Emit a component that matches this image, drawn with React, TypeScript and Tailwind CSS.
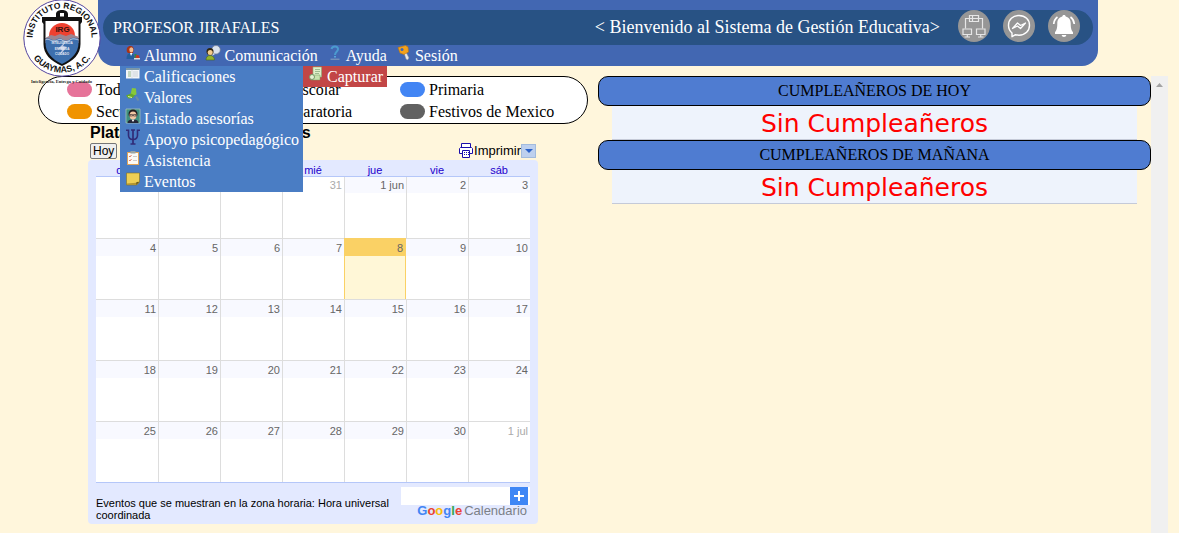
import type { ReactNode } from "react";

const serif = "font-['Liberation_Serif',serif]";
const sans = "font-['Liberation_Sans',sans-serif]";

const Icon = ({ children }: { children: ReactNode }) => (
  <svg viewBox="0 0 16 16" className="h-4 w-4 shrink-0" aria-hidden="true">
    {children}
  </svg>
);

const StudentIcon = () => (
  <Icon>
    <path d="M2 7C1 3 3 .8 5.500 1 8 1 9 3 8.500 5L8 8H3z" fill="#a93316" />
    <ellipse cx="6.300" cy="4.800" rx="2" ry="2.600" fill="#f3bd90" />
    <path d="M1.500 14c0-4 1.500-6 4-6s4 2 4 6z" fill="#245e9c" />
    <path d="M5 8l1 3 1.500-3z" fill="#fff" />
    <path d="M9.500 9h2v4h-2z" fill="#2f8b45" />
    <circle cx="12.500" cy="12" r="2" fill="#c83824" />
    <path d="M9 13h6v1.500H9z" fill="#ddd" />
  </Icon>
);

const ChatIcon = () => (
  <Icon>
    <circle cx="11" cy="4.800" r="4.300" fill="#d9e2ee" stroke="#6d7c91" strokeWidth=".7" />
    <path d="M8 8l-1 3 3-2z" fill="#d9e2ee" />
    <circle cx="5" cy="6.500" r="3.500" fill="#30250f" />
    <circle cx="5.200" cy="7.500" r="2.500" fill="#f4cc8d" />
    <path d="M1 15c0-3 1.500-4.500 4-4.500S9.500 12 9.500 15z" fill="#92b32d" stroke="#4b641c" strokeWidth=".6" />
  </Icon>
);

const HelpIcon = () => (
  <Icon>
    <path d="M4.500 4C5 1 11 .5 11 4c0 3-3 2.500-3 6" fill="none" stroke="#4b9bcf" strokeWidth="2" />
    <path d="M7 11h2v1.500H7z" fill="#58a9da" />
    <path d="M3.500 14.200h9" stroke="#8ca3bd" />
  </Icon>
);

const KeyIcon = () => (
  <Icon>
    <path d="M8 8l2-1 3 6-1.500 2-1.500-1z" fill="#e8e8e8" stroke="#8f8f8f" strokeWidth=".5" />
    <path d="M2 2.500L9.500.5 12 2l.5 5L8 9.500 4 8z" fill="#f4a21b" stroke="#bd750d" strokeWidth=".6" />
    <circle cx="6" cy="4.500" r="1.500" fill="#4267b2" />
  </Icon>
);

const GradesIcon = () => (
  <Icon>
    <path d="M1 2.500h13.500v10H1z" fill="#f4f6f8" />
    <path d="M1 2h13.500v2H1z" fill="#7c98a8" />
    <path d="M3 6h3M3 8h3M3 10h3" stroke="#97b88c" />
    <path d="M8 6h5M8 8h5M8 10h5" stroke="#b9c2cc" strokeWidth=".7" />
    <path d="M7 4v8" stroke="#c0c8d0" strokeWidth=".5" />
  </Icon>
);

const ValuesIcon = () => (
  <Icon>
    <path d="M7 1l4 .5.5 6-3 1-3-1z" fill="#87c83a" />
    <path d="M1 8.500l5-2 4 2-2.500 2.500-4 .5z" fill="#67a928" />
    <path d="M3 9.500l4 1" stroke="#d8f2a5" />
    <path d="M11 9.500l2.500 4" stroke="#6d8da3" strokeWidth="2" />
  </Icon>
);

const AdvisorIcon = () => (
  <Icon>
    <path d="M1 1h14v14H1z" fill="#3f8f80" />
    <path d="M1 1h14v14H1z" fill="none" stroke="#b3c8b7" strokeWidth=".7" />
    <circle cx="8" cy="6" r="4.500" fill="#221b1d" />
    <ellipse cx="8" cy="7.500" rx="3.500" ry="4" fill="#f2c6a2" />
    <path d="M5 6.500h2.500v1.500H5zM8.500 6.500H11v1.500H8.500z" fill="none" stroke="#28242b" strokeWidth=".6" />
    <path d="M2.500 15c0-2.500 2-3.500 5.500-3.500s5.500 1 5.500 3.500z" fill="#252637" />
    <path d="M6.500 11.500L8 14l1.500-2.500z" fill="#fff" />
  </Icon>
);

const PsiIcon = () => (
  <Icon>
    <path d="M1 1.200h2.500v5c0 3 1 4.200 4.500 4.200s4.500-1.200 4.500-4.200v-5H15" fill="none" stroke="#312c78" strokeWidth="1.600" />
    <path d="M8 1v14M5.500 15h5M6 1h4" stroke="#312c78" strokeWidth="1.700" />
  </Icon>
);

const ClipboardIcon = () => (
  <Icon>
    <path d="M2 2h12v13H2z" fill="#dda35a" />
    <path d="M3 3h10v11H3z" fill="#fcfaf5" />
    <path d="M5.500 1h5v2.500h-5z" fill="#9aa5a5" />
    <path d="M4 6l1 1 1.500-2M4 10l1 1 1.500-2" fill="none" stroke="#d95d47" strokeWidth=".8" />
    <path d="M8 6.500h4M8 10.500h4" stroke="#ccc" />
  </Icon>
);

const NoteIcon = () => (
  <Icon>
    <path d="M1.500 2h13v9l-3 3h-10z" fill="#edcf55" stroke="#81701f" strokeWidth=".6" />
    <path d="M2 12.500l12.500-1-3 2.500H2z" fill="#b29532" />
    <path d="M11 14l.5-3 3-.2z" fill="#6a591b" />
  </Icon>
);

const CaptureIcon = () => (
  <Icon>
    <path d="M5 1h8.500v10H5z" fill="#dff0ca" stroke="#8cae7b" strokeWidth=".6" />
    <path d="M7 3.500h5M7 5.500h5M7 7.500h4" stroke="#8caf80" strokeWidth=".8" />
    <path d="M3 9h9v5H3z" fill="#c7e3ae" stroke="#74985e" strokeWidth=".5" />
    <circle cx="4" cy="11" r="2.500" fill="#e6f2d4" stroke="#759968" />
  </Icon>
);

const Logo = () => (
  <svg viewBox="20 0 84 86" className="h-[86px] w-[84px]" role="img" aria-label="Instituto Regional Guaymas">
    <defs>
      <path id="ring-top" d="M32.500 38a29.500 29.500 0 0 1 59 0" />
      <path id="ring-bottom" d="M26.500 37a35.500 35.500 0 0 0 71 0" />
      <clipPath id="shield">
        <path d="M45.500 21h33v22c0 9-6 16-16.500 21-10.500-5-16.500-12-16.500-21z" />
      </clipPath>
    </defs>
    <circle cx="62" cy="38" r="38.200" fill="#fff" stroke="#5546a0" />
    <g fontFamily="Liberation Sans, sans-serif" fontWeight="bold" fill="#111">
      <text fontSize="8.500">
        <textPath href="#ring-top" startOffset="50%" textAnchor="middle">INSTITUTO REGIONAL</textPath>
      </text>
      <text fontSize="8.800">
        <textPath href="#ring-bottom" startOffset="50%" textAnchor="middle">GUAYMAS, A.C.</textPath>
      </text>
    </g>
    <path d="M42 22v-5h14v-3c0-5.500 12-5.500 12 0v3h14v5l-1.500 2v20c0 10-7 17-18.500 22-11.500-5-18.500-12-18.500-22V24z" fill="#111" />
    <path d="M60 13h4v3.500h-4z" fill="#fff" />
    <g clipPath="url(#shield)">
      <path d="M44 20h36v18H44z" fill="#fff" />
      <path d="M49 36a13 13 0 0 1 26 0z" fill="#ee4130" />
      <path d="M45 38l6-3 4 1 5-2 6 2 5-2 8 3v6H45z" fill="#9d8590" />
      <path d="M45 39c4-2 5 1 9 1s5-3 8-1 5 2 8 0 5-1 9 0v28H45z" fill="#3d6fad" />
      <path d="M45 40c4-2 5 1 9 1s5-3 8-1 5 2 8 0 5-1 9 0" fill="none" stroke="#dfe5ee" strokeWidth=".8" />
      <path d="M66 41l-8 8 4 1-3 6 8-9-4-1z" fill="#bfc9e2" />
    </g>
    <g fontFamily="Liberation Sans, sans-serif" fontWeight="bold" textAnchor="middle">
      <text x="62.500" y="32" fontSize="8" fill="#33130f">IRG</text>
      <g fontSize="3" fill="#e8ecf5">
        <text x="62" y="44">INTELIGENCIA</text>
        <text x="62" y="49.500">ENTREGA</text>
        <text x="62" y="55">CUIDADO</text>
      </g>
    </g>
    <text x="61.500" y="83" fontSize="4.500" fontWeight="bold" fontFamily="Liberation Serif, serif" textAnchor="middle" fill="#222">
      Inteligencia, Entrega y Cuidado
    </text>
  </svg>
);

const NetworkIcon = () => (
  <svg viewBox="0 0 32 32" className="h-8 w-8" fill="none" stroke="#e6e6e6" aria-hidden="true">
    <path d="M11.500 5.500h9v6h-9zM11.500 8.500h9M14.500 5.500v6M11 8.500H7.500v10M21 8.500h3.500v10" strokeWidth="1.200" />
    <path d="M5 19h8.500v5.500H5zM18.500 19H27v5.500h-8.500zM9.300 25v2M22.700 25v2M6.500 27h5.500M20 27h5.500" strokeWidth="1.200" />
  </svg>
);

const MessengerIcon = () => (
  <svg viewBox="0 0 32 32" className="h-8 w-8" fill="none" stroke="#fff" strokeWidth="1.400" strokeLinejoin="round" aria-hidden="true">
    <path d="M16 5.500c-6.300 0-10.500 4.300-10.500 9.800 0 3.200 1.400 5.900 3.500 7.700v3.700l3.500-2c1.100.3 2.300.5 3.500.5 6.300 0 10.500-4.400 10.500-9.900S22.300 5.500 16 5.500z" />
    <path d="M9.500 18.500l5-5.500 3 2.500 5-2.500-5 5.500-3-2.500z" strokeWidth="1.300" />
  </svg>
);

const BellIcon = () => (
  <svg viewBox="0 0 32 32" className="h-8 w-8" fill="#fff" aria-hidden="true">
    <path d="M16 5c1 0 1.700.7 1.700 1.600 3.500.8 5 3.500 5 7 0 5 .8 7 2.300 8.700v1.700H7v-1.700c1.500-1.700 2.300-3.700 2.300-8.700 0-3.500 1.500-6.200 5-7C14.300 5.700 15 5 16 5zM13.700 25h4.600c0 2.500-4.600 2.500-4.600 0z" />
    <path d="M9.500 7C7.300 8.500 6 10.800 5.700 14M22.500 7c2.200 1.500 3.500 3.800 3.800 7" fill="none" stroke="#fff" strokeWidth="1.700" />
  </svg>
);

const menu = [
  { label: "Alumno", icon: <StudentIcon /> },
  { label: "Comunicación", icon: <ChatIcon /> },
  { label: "Ayuda", icon: <HelpIcon /> },
  { label: "Sesión", icon: <KeyIcon /> },
];

const submenu = [
  { label: "Calificaciones", icon: <GradesIcon /> },
  { label: "Valores", icon: <ValuesIcon /> },
  { label: "Listado asesorías", icon: <AdvisorIcon /> },
  { label: "Apoyo psicopedagógico", icon: <PsiIcon /> },
  { label: "Asistencia", icon: <ClipboardIcon /> },
  { label: "Eventos", icon: <NoteIcon /> },
];

const actions = [
  { label: "Red", icon: <NetworkIcon /> },
  { label: "Mensajes", icon: <MessengerIcon /> },
  { label: "Notificaciones", icon: <BellIcon /> },
];

const legend = [
  { label: "Todos", color: "bg-[#e67399]" },
  { label: "Preescolar", color: "bg-[#7cb342]" },
  { label: "Primaria", color: "bg-[#4285f4]" },
  { label: "Secundaria", color: "bg-[#f09300]" },
  { label: "Preparatoria", color: "bg-[#8e24aa]" },
  { label: "Festivos de Mexico", color: "bg-[#616161]" },
];

const days = ["dom", "lun", "mar", "mié", "jue", "vie", "sáb"];

const weeks = [
  ["28", "29", "30", "31", "1 jun", "2", "3"],
  ["4", "5", "6", "7", "8", "9", "10"],
  ["11", "12", "13", "14", "15", "16", "17"],
  ["18", "19", "20", "21", "22", "23", "24"],
  ["25", "26", "27", "28", "29", "30", "1 jul"],
];

const MenuLink = ({ label, icon }: { label: string; icon: ReactNode }) => (
  <a href="#" className="flex h-[21px] gap-[3px] pr-1 pl-[5px] text-base leading-[21px] whitespace-nowrap text-white">
    {icon}
    {label}
  </a>
);

const Header = () => (
  <header className="flex">
    <div className="relative z-10 -mr-[6px] h-[66px] w-[104px] shrink-0 pl-5">
      <Logo />
    </div>
    <div className="mr-20 max-w-[1000px] flex-1 rounded-b-2xl bg-[#4267b2] px-[5px] pt-[10px]">
      <div className="flex h-[35px] items-center rounded-full bg-[#285284] pr-[13px] pl-[10px] text-white">
        <span className="flex-1 text-base">PROFESOR JIRAFALES</span>
        <span className="mr-[18px] pb-[2px] text-lg leading-8">&lt; Bienvenido al Sistema de Gestión Educativa&gt;</span>
        <div className="flex gap-[13px] pb-[3px]">
          {actions.map((a) => (
            <button key={a.label} aria-label={a.label} className="h-8 w-8 rounded-full bg-[#969696]">
              {a.icon}
            </button>
          ))}
        </div>
      </div>
      <nav className="relative z-20 pl-[17px]">
        <ul className="flex">
          {menu.map((m) => (
            <li key={m.label}>
              <MenuLink {...m} />
            </li>
          ))}
        </ul>
        {/* Open dropdown of "Alumno" with its side entry */}
        <div className="absolute top-full flex items-start">
          <ul className="bg-[#4a7dc4]">
            {submenu.map((m) => (
              <li key={m.label}>
                <MenuLink {...m} />
              </li>
            ))}
          </ul>
          <div className="bg-[#c24646]">
            <MenuLink label="Capturar" icon={<CaptureIcon />} />
          </div>
        </div>
      </nav>
    </div>
  </header>
);

const Legend = () => (
  <ul className="grid h-12 grid-cols-[178px_155px_1fr] content-center gap-y-[1px] rounded-full border border-black bg-white pl-7">
    {legend.map((l) => (
      <li key={l.label} className="flex items-center gap-1 text-base leading-[21px] whitespace-nowrap">
        <span className={`h-[15px] w-[25px] rounded-full ${l.color}`} />
        {l.label}
      </li>
    ))}
  </ul>
);

const PrinterIcon = () => (
  <svg viewBox="0 0 14 15" className="h-[15px] w-[14px]" fill="#fff" stroke="#1a0dab" aria-hidden="true">
    <path d="M2.500 4.500v-4h9v4" />
    <path d="M1.500 4.500h11l1 1v5H.5v-5z" />
    <path d="M3.500 7.500h7v7h-7z" />
    <path d="M5 9.500h5M5 11.500h5" strokeDasharray="1 1" />
  </svg>
);

const dayStyle = (week: number, day: number) => {
  if (week === 1 && day === 4) return "bg-[#fad165] text-[#666]";
  if ((week === 0 && day < 4) || (week === 4 && day === 6)) return "text-[#aaa]";
  return "bg-[#f8f9ff] text-[#666]";
};

const cellStyle = (week: number, day: number) => {
  if (week === 1 && day === 4) return "border-t border-r border-l border-[#fad165] bg-[#fff7d7]";
  return `border-[#ddd] ${week > 0 ? "border-t" : ""} ${day > 0 && !(week === 1 && day === 5) ? "border-l" : ""}`;
};

const Calendar = () => (
  <section className={`mx-[50px] text-black ${sans}`}>
    <h1 className="pl-[2px] text-base leading-[18px] font-bold">Plataforma educativa Cursos</h1>
    <div className="flex h-[18px] items-center justify-between px-[2px] text-xs">
      <button className="h-4 rounded-[2px] border border-[#767676] bg-[#efefef] px-[2px] leading-[14px]">Hoy</button>
      <div className="flex items-center">
        <a href="#" className="flex items-center gap-[1px] text-[13px]">
          <PrinterIcon />
          Imprimir
        </a>
        <button aria-label="Opciones de impresión" className="flex h-[14px] w-[15px] items-center justify-center border border-[#a2bbdd] bg-[#bed0ee]">
          <svg viewBox="0 0 8 4" className="h-1 w-2" aria-hidden="true">
            <path d="M0 0h8L4 4z" fill="#2b62c9" />
          </svg>
        </button>
      </div>
    </div>
    <div className="rounded-[4px] bg-[#e3e9ff] px-2">
      <table className="w-full table-fixed border-separate border-spacing-0 border-b border-[#b5c7f9] bg-white text-[11px]">
        <thead>
          <tr className="bg-[#e3e9ff]">
            {days.map((d) => (
              <th key={d} className="h-[17px] border-b border-[#b5c7f9] p-0 pt-1 leading-3 font-normal text-[#20c]">
                {d}
              </th>
            ))}
          </tr>
        </thead>
        <tbody>
          {weeks.map((week, w) => (
            <tr key={w}>
              {week.map((day, d) => (
                <td key={d} className={`h-[61px] p-0 text-right align-top ${cellStyle(w, d)}`}>
                  <div className={`pr-[2px] ${w === 0 ? "h-4 leading-4" : "h-[17px] leading-[18px]"} ${dayStyle(w, d)}`}>
                    {day}
                  </div>
                </td>
              ))}
            </tr>
          ))}
        </tbody>
      </table>
      <div className="flex items-start justify-between pt-1 pb-[3px]">
        <p className="w-[300px] pt-[10px] text-[11px] leading-3">
          Eventos que se muestran en la zona horaria: Hora universal coordinada
        </p>
        <div className="w-[129px]">
          <div className="flex h-[18px] justify-end bg-white pr-[2px]">
            <button aria-label="Agregar calendario" className="flex h-[18px] w-[18px] items-center justify-center bg-[#3f87f5]">
              <svg viewBox="0 0 10 10" className="h-[10px] w-[10px]" stroke="#fff" strokeWidth="2" aria-hidden="true">
                <path d="M5 0v10M0 5h10" />
              </svg>
            </button>
          </div>
          <div className="flex justify-end gap-[2px] pr-[3px] text-[13px] leading-3 text-[#7b8087]">
            <span className="font-bold">
              <span className="text-[#4285f4]">G</span>
              <span className="text-[#ea4335]">o</span>
              <span className="text-[#fbbc05]">o</span>
              <span className="text-[#4285f4]">g</span>
              <span className="text-[#34a853]">l</span>
              <span className="text-[#ea4335]">e</span>
            </span>
            <span>Calendario</span>
          </div>
        </div>
      </div>
    </div>
  </section>
);

const Birthdays = ({ title }: { title: string }) => (
  <section className="text-center">
    <h2 className="h-[30px] rounded-[10px] border border-black bg-[#4f7cd1] text-base leading-7 text-black">{title}</h2>
    <p className="mx-[14px] h-[34px] border-b border-[#c5cad8] bg-[#eef3fc] font-['DejaVu_Sans',sans-serif] text-[25px] leading-9 text-[#f00]">
      Sin Cumpleañeros
    </p>
  </section>
);

export default function App() {
  return (
    <div className={`flex min-h-screen flex-col bg-[#fff6dc] text-black ${serif}`}>
      <Header />
      <main className="flex flex-1 gap-[10px] pt-[10px] pr-[11px] pl-[38px]">
        <div className="w-[550px] shrink-0">
          <Legend />
          <Calendar />
        </div>
        <aside className="flex flex-1">
          <div className="flex-1">
            <Birthdays title="CUMPLEAÑEROS DE HOY" />
            <Birthdays title="CUMPLEAÑEROS DE MAÑANA" />
          </div>
          <div className="flex w-[17px] justify-center bg-[#f0f0f0] pt-[7px]">
            <svg viewBox="0 0 7 4" className="h-1 w-[7px]" aria-hidden="true">
              <path d="M3.500 0L7 4H0z" fill="#a3a3a3" />
            </svg>
          </div>
        </aside>
      </main>
    </div>
  );
}
